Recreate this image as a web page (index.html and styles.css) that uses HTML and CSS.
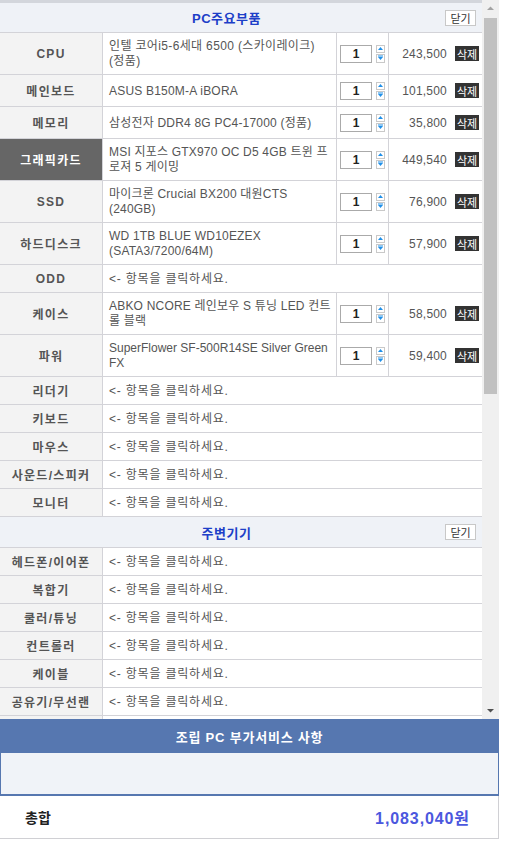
FILE: index.html
```html
<!DOCTYPE html>
<html lang="ko">
<head>
<meta charset="utf-8">
<title>PC 견적</title>
<link rel="stylesheet" href="styles.css">
</head>
<body>
<div class="wrap">
  <div class="panel">
    <div class="list">
      <div class="head">
        <span class="head-title">PC주요부품</span>
        <span class="close">닫기</span>
      </div>

      <div class="row tall">
        <div class="lab">CPU</div>
        <div class="name ko">인텔 코어i5-6세대 6500 (스카이레이크)<br>(정품)</div>
        <div class="qty"><span class="qbox">1</span><svg class="spin" width="9" height="18" viewBox="0 0 9 18"><rect x="0.5" y="0.5" width="8" height="7" fill="#fff" stroke="#c9c9c9"/><path d="M2 5 L4.5 2 L7 5 Z" fill="#1f8fe8"/><rect x="0.5" y="9.5" width="8" height="8" fill="#fff" stroke="#c9c9c9"/><path d="M2 12 L7 12 L4.5 15 Z" fill="#1f8fe8"/><rect x="2" y="10.5" width="5" height="1" fill="#1f8fe8"/></svg></div>
        <div class="price"><span>243,500</span><span class="del">삭제</span></div>
      </div>

      <div class="row mid">
        <div class="lab">메인보드</div>
        <div class="name">ASUS B150M-A iBORA</div>
        <div class="qty"><span class="qbox">1</span><svg class="spin" width="9" height="18" viewBox="0 0 9 18"><rect x="0.5" y="0.5" width="8" height="7" fill="#fff" stroke="#c9c9c9"/><path d="M2 5 L4.5 2 L7 5 Z" fill="#1f8fe8"/><rect x="0.5" y="9.5" width="8" height="8" fill="#fff" stroke="#c9c9c9"/><path d="M2 12 L7 12 L4.5 15 Z" fill="#1f8fe8"/><rect x="2" y="10.5" width="5" height="1" fill="#1f8fe8"/></svg></div>
        <div class="price"><span>101,500</span><span class="del">삭제</span></div>
      </div>

      <div class="row mid">
        <div class="lab">메모리</div>
        <div class="name">삼성전자 DDR4 8G PC4-17000 (정품)</div>
        <div class="qty"><span class="qbox">1</span><svg class="spin" width="9" height="18" viewBox="0 0 9 18"><rect x="0.5" y="0.5" width="8" height="7" fill="#fff" stroke="#c9c9c9"/><path d="M2 5 L4.5 2 L7 5 Z" fill="#1f8fe8"/><rect x="0.5" y="9.5" width="8" height="8" fill="#fff" stroke="#c9c9c9"/><path d="M2 12 L7 12 L4.5 15 Z" fill="#1f8fe8"/><rect x="2" y="10.5" width="5" height="1" fill="#1f8fe8"/></svg></div>
        <div class="price"><span>35,800</span><span class="del">삭제</span></div>
      </div>

      <div class="row tall">
        <div class="lab sel">그래픽카드</div>
        <div class="name">MSI 지포스 GTX970 OC D5 4GB 트윈 프<br>로져 5 게이밍</div>
        <div class="qty"><span class="qbox">1</span><svg class="spin" width="9" height="18" viewBox="0 0 9 18"><rect x="0.5" y="0.5" width="8" height="7" fill="#fff" stroke="#c9c9c9"/><path d="M2 5 L4.5 2 L7 5 Z" fill="#1f8fe8"/><rect x="0.5" y="9.5" width="8" height="8" fill="#fff" stroke="#c9c9c9"/><path d="M2 12 L7 12 L4.5 15 Z" fill="#1f8fe8"/><rect x="2" y="10.5" width="5" height="1" fill="#1f8fe8"/></svg></div>
        <div class="price"><span>449,540</span><span class="del">삭제</span></div>
      </div>

      <div class="row tall">
        <div class="lab">SSD</div>
        <div class="name">마이크론 Crucial BX200 대원CTS<br>(240GB)</div>
        <div class="qty"><span class="qbox">1</span><svg class="spin" width="9" height="18" viewBox="0 0 9 18"><rect x="0.5" y="0.5" width="8" height="7" fill="#fff" stroke="#c9c9c9"/><path d="M2 5 L4.5 2 L7 5 Z" fill="#1f8fe8"/><rect x="0.5" y="9.5" width="8" height="8" fill="#fff" stroke="#c9c9c9"/><path d="M2 12 L7 12 L4.5 15 Z" fill="#1f8fe8"/><rect x="2" y="10.5" width="5" height="1" fill="#1f8fe8"/></svg></div>
        <div class="price"><span>76,900</span><span class="del">삭제</span></div>
      </div>

      <div class="row tall">
        <div class="lab">하드디스크</div>
        <div class="name">WD 1TB BLUE WD10EZEX<br>(SATA3/7200/64M)</div>
        <div class="qty"><span class="qbox">1</span><svg class="spin" width="9" height="18" viewBox="0 0 9 18"><rect x="0.5" y="0.5" width="8" height="7" fill="#fff" stroke="#c9c9c9"/><path d="M2 5 L4.5 2 L7 5 Z" fill="#1f8fe8"/><rect x="0.5" y="9.5" width="8" height="8" fill="#fff" stroke="#c9c9c9"/><path d="M2 12 L7 12 L4.5 15 Z" fill="#1f8fe8"/><rect x="2" y="10.5" width="5" height="1" fill="#1f8fe8"/></svg></div>
        <div class="price"><span>57,900</span><span class="del">삭제</span></div>
      </div>

      <div class="row">
        <div class="lab">ODD</div>
        <div class="name wide">&lt;- 항목을 클릭하세요.</div>
      </div>

      <div class="row tall">
        <div class="lab">케이스</div>
        <div class="name">ABKO NCORE 레인보우 S 튜닝 LED 컨트<br>롤 블랙</div>
        <div class="qty"><span class="qbox">1</span><svg class="spin" width="9" height="18" viewBox="0 0 9 18"><rect x="0.5" y="0.5" width="8" height="7" fill="#fff" stroke="#c9c9c9"/><path d="M2 5 L4.5 2 L7 5 Z" fill="#1f8fe8"/><rect x="0.5" y="9.5" width="8" height="8" fill="#fff" stroke="#c9c9c9"/><path d="M2 12 L7 12 L4.5 15 Z" fill="#1f8fe8"/><rect x="2" y="10.5" width="5" height="1" fill="#1f8fe8"/></svg></div>
        <div class="price"><span>58,500</span><span class="del">삭제</span></div>
      </div>

      <div class="row tall">
        <div class="lab">파워</div>
        <div class="name tight">SuperFlower SF-500R14SE Silver Green<br>FX</div>
        <div class="qty"><span class="qbox">1</span><svg class="spin" width="9" height="18" viewBox="0 0 9 18"><rect x="0.5" y="0.5" width="8" height="7" fill="#fff" stroke="#c9c9c9"/><path d="M2 5 L4.5 2 L7 5 Z" fill="#1f8fe8"/><rect x="0.5" y="9.5" width="8" height="8" fill="#fff" stroke="#c9c9c9"/><path d="M2 12 L7 12 L4.5 15 Z" fill="#1f8fe8"/><rect x="2" y="10.5" width="5" height="1" fill="#1f8fe8"/></svg></div>
        <div class="price"><span>59,400</span><span class="del">삭제</span></div>
      </div>

      <div class="row"><div class="lab">리더기</div><div class="name wide">&lt;- 항목을 클릭하세요.</div></div>
      <div class="row"><div class="lab">키보드</div><div class="name wide">&lt;- 항목을 클릭하세요.</div></div>
      <div class="row"><div class="lab">마우스</div><div class="name wide">&lt;- 항목을 클릭하세요.</div></div>
      <div class="row"><div class="lab">사운드/스피커</div><div class="name wide">&lt;- 항목을 클릭하세요.</div></div>
      <div class="row"><div class="lab">모니터</div><div class="name wide">&lt;- 항목을 클릭하세요.</div></div>

      <div class="head sub">
        <span class="head-title">주변기기</span>
        <span class="close">닫기</span>
      </div>

      <div class="row"><div class="lab">헤드폰/이어폰</div><div class="name wide">&lt;- 항목을 클릭하세요.</div></div>
      <div class="row"><div class="lab">복합기</div><div class="name wide">&lt;- 항목을 클릭하세요.</div></div>
      <div class="row"><div class="lab">쿨러/튜닝</div><div class="name wide">&lt;- 항목을 클릭하세요.</div></div>
      <div class="row"><div class="lab">컨트롤러</div><div class="name wide">&lt;- 항목을 클릭하세요.</div></div>
      <div class="row"><div class="lab">케이블</div><div class="name wide">&lt;- 항목을 클릭하세요.</div></div>
      <div class="row"><div class="lab">공유기/무선랜</div><div class="name wide">&lt;- 항목을 클릭하세요.</div></div>
      <div class="row"><div class="lab"></div><div class="name wide"></div></div>
    </div>

    <div class="sbar">
      <div class="sbtn"><svg width="17" height="17" viewBox="0 0 17 17"><path d="M5 10 L8.5 6.5 L12 10 Z" fill="#a3a3a3"/></svg></div>
      <div class="thumb"></div>
      <div class="track"></div>
      <div class="sbtn"><svg width="17" height="17" viewBox="0 0 17 17"><path d="M5 7 L12 7 L8.5 10.5 Z" fill="#505050"/></svg></div>
    </div>
  </div>

  <div class="svc">
    <div class="svc-title">조립 PC 부가서비스 사항</div>
    <div class="svc-body"></div>
  </div>

  <div class="total">
    <span class="total-label">총합</span>
    <span class="total-value">1,083,040원</span>
  </div>
</div>
</body>
</html>
```

FILE: styles.css
```css
* { box-sizing: border-box; }

body {
  margin: 0;
  background: #fff;
  font-family: "Liberation Sans", "Noto Sans CJK KR", sans-serif;
  font-size: 12px;
  color: #555;
}

.wrap {
  width: 499px;
}

.panel {
  display: flex;
  height: 719px;
}

.list {
  width: 482px;
  overflow: hidden;
  border-top: 3px solid #d3d6dc;
}

.head {
  height: 30px;
  display: flex;
  align-items: center;
  background: #eff2f7;
  border-bottom: 1px solid #d3d3d8;
  padding-left: 8px;
  padding-right: 6px;
}

.head.sub {
  height: 31px;
}

.head-title {
  flex: 1;
  text-align: center;
  font-weight: bold;
  font-size: 13px;
  color: #1d3fc8;
  letter-spacing: 0.5px;
}

.close {
  width: 31px;
  height: 16px;
  border: 1px solid #c8c8c8;
  background: #fff;
  font-size: 11px;
  color: #333;
  display: flex;
  align-items: center;
  justify-content: center;
}

.row {
  display: grid;
  grid-template-columns: 103px 234px 52px 1fr;
  height: 28px;
  border-bottom: 1px solid #d3d3d8;
}

.row.mid { height: 32px; }
.row.tall { height: 42px; }

.lab {
  background: #f3f3f3;
  border-right: 1px solid #d3d3d8;
  display: flex;
  align-items: center;
  justify-content: center;
  font-weight: bold;
  color: #555;
  letter-spacing: 1.3px;
  font-size: 12px;
}

.lab.sel {
  background: #666;
  color: #fff;
}

.name {
  padding-left: 6px;
  padding-top: 1px;
  display: flex;
  align-items: center;
  border-right: 1px solid #d3d3d8;
  line-height: 15px;
  color: #555;
  white-space: nowrap;
  overflow: hidden;
  letter-spacing: 0.2px;
}

.name.ko { letter-spacing: 0.35px; }
.name.tight { letter-spacing: 0; }

.name.wide {
  grid-column: 2 / -1;
  border-right: none;
  letter-spacing: 0.8px;
}

.qty {
  border-right: 1px solid #d3d3d8;
  display: flex;
  align-items: center;
  padding-left: 3px;
  gap: 4px;
}

.qbox {
  width: 32px;
  height: 18px;
  border: 1px solid #aaa;
  display: flex;
  align-items: center;
  justify-content: center;
  font-weight: bold;
  color: #222;
  font-size: 12px;
}

.spin { display: block; }

.price {
  display: flex;
  align-items: center;
  justify-content: flex-end;
  gap: 8px;
  padding-right: 3px;
  color: #555;
  letter-spacing: 0.2px;
}

.del {
  width: 24px;
  height: 15px;
  background: #333;
  color: #fff;
  font-size: 11px;
  letter-spacing: 0;
  display: flex;
  align-items: center;
  justify-content: center;
}

.sbar {
  width: 17px;
  background: #f0f0f0;
  display: flex;
  flex-direction: column;
}

.sbtn {
  height: 17px;
  flex: none;
}

.sbtn svg { display: block; }

.thumb {
  height: 376px;
  margin: 1px 2px 0;
  background: #c1c1c1;
  flex: none;
}

.track { flex: 1; }

.svc {
  border: 1px solid #5677b0;
  border-bottom-width: 2px;
}

.svc-title {
  height: 33px;
  background: #5677b0;
  color: #fff;
  font-weight: bold;
  font-size: 13px;
  display: flex;
  align-items: center;
  justify-content: center;
  letter-spacing: 0.8px;
}

.svc-body {
  height: 41px;
  background: #f0f3f8;
}

.total {
  height: 43px;
  border-bottom: 1px solid #d0d0d4;
  border-right: 1px solid #d0d0d4;
  display: flex;
  align-items: center;
  justify-content: space-between;
  padding: 0 28px 0 25px;
}

.total-label {
  font-weight: bold;
  font-size: 14px;
  color: #222;
}

.total-value {
  font-weight: bold;
  font-size: 16px;
  color: #4b57de;
  letter-spacing: 0.9px;
}
```
